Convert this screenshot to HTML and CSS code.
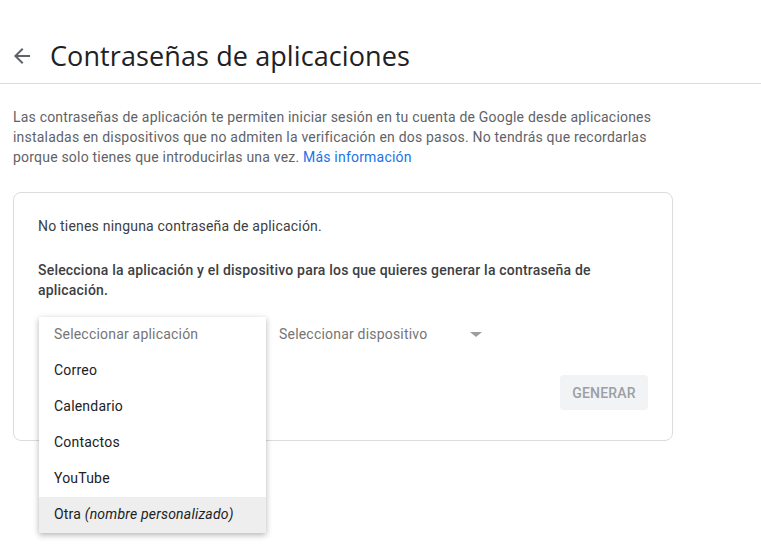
FILE: index.html
```html
<!DOCTYPE html>
<html lang="es">
<head>
  <meta charset="UTF-8">
  <meta name="viewport" content="width=device-width, initial-scale=1.0">
  <title>Contraseñas de aplicaciones</title>
<link rel="stylesheet" href="styles.css">
</head>
<body>

  <div class="cabecera">
    <a class="volver" href="#" aria-label="Atrás">
      <svg width="24" height="24" viewBox="0 0 24 24"><path d="M20 11H7.83l5.59-5.59L12 4l-8 8 8 8 1.41-1.41L7.83 13H20v-2z" fill="#5f6368"/></svg>
    </a>
    <h1>Contraseñas de aplicaciones</h1>
  </div>

  <div class="contenido">
    <p class="intro">
      Las contraseñas de aplicación te permiten iniciar sesión en tu cuenta de Google desde aplicaciones
      instaladas en dispositivos que no admiten la verificación en dos pasos. No tendrás que recordarlas
      porque solo tienes que introducirlas una vez. <a href="#">Más información</a>
    </p>

    <div class="tarjeta">
      <p class="vacio">No tienes ninguna contraseña de aplicación.</p>
      <p class="instruccion">Selecciona la aplicación y el dispositivo para los que quieres generar la contraseña de aplicación.</p>

      <div class="selectores">
        <div class="selector abierto">
          <span class="selector-texto">Seleccionar aplicación</span>
          <span class="flecha"></span>
          <ul class="menu">
            <li class="placeholder">Seleccionar aplicación</li>
            <li>Correo</li>
            <li>Calendario</li>
            <li>Contactos</li>
            <li>YouTube</li>
            <li class="activo">Otra <em>(nombre personalizado)</em></li>
          </ul>
        </div>
        <div class="selector">
          <span class="selector-texto">Seleccionar dispositivo</span>
          <span class="flecha"></span>
        </div>
      </div>

      <div class="acciones">
        <button class="botao-generar" disabled>Generar</button>
      </div>
    </div>
  </div>

</body>
</html>
```

FILE: styles.css
```css
html {
  height: 100%;
}

body {
  font-family: Roboto, "Noto Sans", sans-serif;
  background-color: #fff;
  margin: 0;
  padding: 0;
  min-height: 100%;
  color: #202124;
  letter-spacing: 0.2px;
}

.cabecera {
  display: flex;
  align-items: center;
  padding: 40px 0 11px 10px;
  border-bottom: 1px solid #dadce0;
}

.volver {
  display: flex;
  width: 24px;
  height: 24px;
  margin-right: 16px;
}

h1 {
  margin: 0;
  font-family: "Open Sans", Roboto, sans-serif;
  font-weight: 400;
  font-size: 27px;
  line-height: 32px;
  letter-spacing: 0.1px;
  color: #202124;
}

.contenido {
  width: 660px;
  margin-left: 13px;
}

.intro {
  margin: 23px 0 25px 0;
  font-size: 14px;
  line-height: 20px;
  color: #5f6368;
}

.intro a {
  color: #1a73e8;
  text-decoration: none;
}

.tarjeta {
  border: 1px solid #dadce0;
  border-radius: 8px;
  padding: 23px 24px 30px 24px;
}

.vacio {
  margin: 0 0 24px 0;
  font-size: 14px;
  line-height: 20px;
  color: #3c4043;
}

.instruccion {
  margin: 0;
  font-size: 14px;
  line-height: 20px;
  font-weight: 500;
  color: #3c4043;
}

.selectores {
  display: flex;
  gap: 24px;
  margin-top: 16px;
}

.selector {
  position: relative;
  display: flex;
  align-items: center;
  justify-content: space-between;
  width: 209px;
  height: 36px;
  font-size: 14px;
  color: #757575;
}

.selector.abierto {
  width: 217px;
}

/* el menú abierto tapa el texto del selector */
.selector.abierto .selector-texto,
.selector.abierto .flecha {
  visibility: hidden;
}

.flecha {
  width: 0;
  height: 0;
  margin-right: 6px;
  border-left: 6px solid transparent;
  border-right: 6px solid transparent;
  border-top: 5px solid #9e9e9e;
}

/* Menú desplegado */
.menu {
  position: absolute;
  top: 1px;
  left: 1px;
  width: 227px;
  margin: 0;
  padding: 0;
  list-style: none;
  background-color: #fff;
  box-shadow: 0 2px 6px rgba(0, 0, 0, 0.3);
  z-index: 2;
}

.menu li {
  height: 36px;
  line-height: 35px;
  padding: 0 15px;
  font-size: 14px;
  color: #202124;
}

.menu li.placeholder {
  color: #757575;
}

.menu li.activo {
  background-color: #eeeeee;
}

.acciones {
  display: flex;
  justify-content: flex-end;
  margin-top: 23px;
}

.botao-generar {
  font-family: Roboto, sans-serif;
  font-size: 14px;
  font-weight: 500;
  text-transform: uppercase;
  letter-spacing: 0.2px;
  width: 88px;
  height: 35px;
  border: none;
  border-radius: 4px;
  background-color: #f1f3f4;
  color: #9aa0a6;
}
```
